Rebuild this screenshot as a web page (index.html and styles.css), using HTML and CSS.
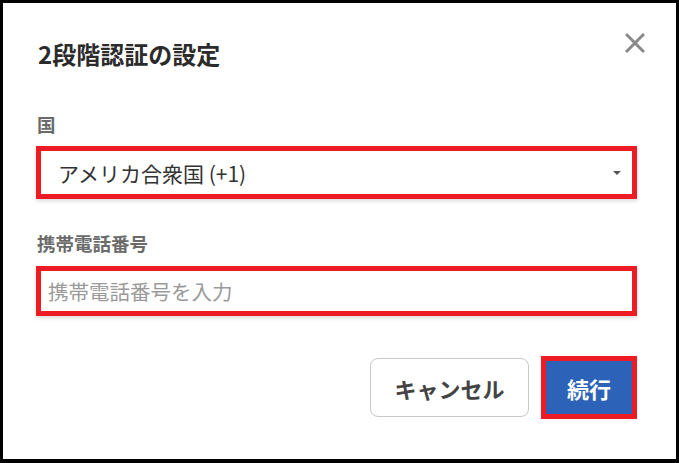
FILE: index.html
```html
<!DOCTYPE html>
<html lang="ja">
<head>
	<meta charset="UTF-8" />
	<meta name="viewport" content="width=device-width, initial-scale=1.0" />
	<title>2段階認証の設定</title>
	<link rel="stylesheet" href="styles.css">
</head>
<body>
	<div class="dialog">
		<header class="head">
			<h2 class="title">2段階認証の設定</h2>
			<button class="close" aria-label="閉じる">
				<svg width="20" height="20" viewBox="0 0 20 20"><path d="M1 1 L19 19 M19 1 L1 19" stroke="#8a8a8a" stroke-width="3" fill="none" /></svg>
			</button>
		</header>
		<div class="field">
			<label class="label">国</label>
			<div class="select mark">
				<span>アメリカ合衆国 (+1)</span>
				<span class="caret"></span>
			</div>
		</div>
		<div class="field">
			<label class="label" for="phone">携帯電話番号</label>
			<input class="input mark" id="phone" type="tel" placeholder="携帯電話番号を入力">
		</div>
		<div class="actions">
			<button class="btn cancel">キャンセル</button>
			<button class="btn primary">続行</button>
		</div>
	</div>
</body>
</html>
```

FILE: styles.css
```css
* { box-sizing: border-box; }
html { font-family: "Noto Sans CJK JP", "Noto Sans", sans-serif; }
body { margin: 0; background: #fff; }

.dialog {
	width: 679px; height: 463px;
	border: solid #000; border-width: 3px 3px 4px 3px;
	background: #fff;
	padding: 35px 39px 0 33px;
	display: flex; flex-direction: column;
}

.head { display: flex; justify-content: space-between; align-items: flex-start; }
.title { margin: 0; font-size: 24px; line-height: 32px; font-weight: bold; color: #2b2b2b; padding-left: 2px; }
.close { border: 0; background: none; padding: 0; margin: -5px -8px 0 0; width: 20px; height: 20px; display: flex; }

.field { display: flex; flex-direction: column; }
.label { font-size: 18.5px; line-height: 24px; font-weight: bold; color: #6b6b6b; padding-left: 1px; }
.field:nth-of-type(1) { margin-top: 42px; }
.field:nth-of-type(1) .label { margin-bottom: 10px; }
.field:nth-of-type(2) { margin-top: 32px; }
.field:nth-of-type(2) .label { margin-bottom: 11px; }

.mark { border: 5px solid #ed1c24; box-shadow: 0 2px 4px rgba(0, 0, 0, 0.15); }

.select {
	height: 53px; display: flex; align-items: center; justify-content: space-between;
	padding: 0 11px 0 17px;
	font-size: 21px; color: #333;
}
.caret { width: 0; height: 0; border-left: 4px solid transparent; border-right: 4px solid transparent; border-top: 4px solid #555; }

.input {
	height: 50px; width: 100%; padding: 0 7px;
	font-family: inherit; font-size: 20.5px; color: #333; outline: none;
}
.input::placeholder { color: #9a9a9a; }

.actions { margin-top: 40px; display: flex; justify-content: flex-end; align-items: center; gap: 12px; }
.btn { font-family: inherit; font-size: 22px; font-weight: bold; cursor: pointer; }
.cancel { width: 159px; height: 59px; border: 1px solid #c8c8c8; border-radius: 8px; background: #fff; color: #444; }
.primary { width: 96px; height: 63px; border: 5px solid #ed1c24; background: #2c63b9; color: #fff; }
```
